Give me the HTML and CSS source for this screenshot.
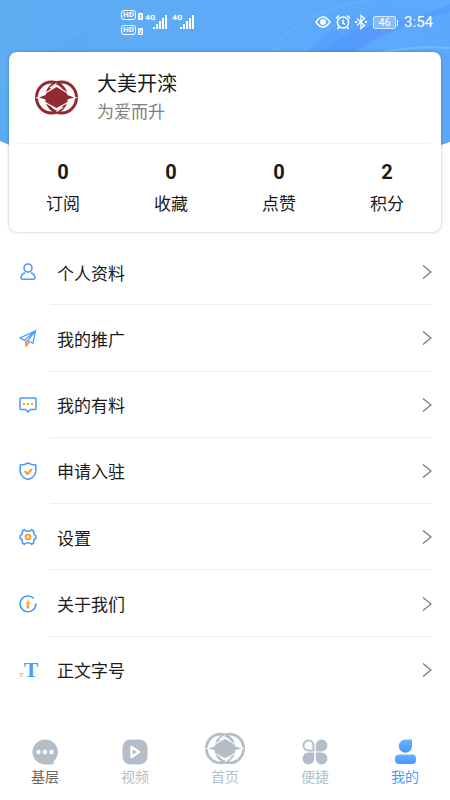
FILE: index.html
```html
<!DOCTYPE html>
<html lang="zh-CN">
<head>
    <meta charset="UTF-8">
    <meta name="viewport" content="width=device-width, initial-scale=1.0">
    <title>我的</title>
    <link rel="stylesheet" href="styles.css">
</head>
<body>
    <!-- Shared symbols -->
    <svg class="defs" width="0" height="0" aria-hidden="true">
        <symbol id="logo" viewBox="0 0 43 35">
            <g fill="none" stroke="currentColor" stroke-width="3">
                <ellipse cx="16.500" cy="17.500" rx="15" ry="15.500"/>
                <ellipse cx="26.500" cy="17.500" rx="15" ry="15.500"/>
            </g>
            <path d="M21.500 3.500L15 8M21.500 31.500L28 27" fill="none" stroke="#fff" stroke-width="1.200"/>
            <path d="M4 17.500L10.500 15L11.500 13L21.500 7L31.500 13L32.500 15L39 17.500L32.500 19.500V22L21.500 28L10.500 22V19.500Z" fill="currentColor" stroke="#fff" stroke-width="2.400" paint-order="stroke"/>
        </symbol>
        <symbol id="arrow" viewBox="0 0 10 16">
            <path d="M1 1.500 L9 8 L1 14.500" fill="none" stroke="#777" stroke-width="1.200"/>
        </symbol>
        <symbol id="signal" viewBox="0 0 15 14">
            <path d="M0 12h2v2h-2zM3 9h2v5h-2zM6 6h2v8h-2zM9 3h2v11h-2zM12 0h2v14h-2z" fill="#fff"/>
        </symbol>
    </svg>

    <header class="header">
        <svg class="header-bg" viewBox="0 0 450 146" preserveAspectRatio="none" aria-hidden="true">
            <defs>
                <linearGradient id="sky" x1="0" x2="1">
                    <stop offset="0" stop-color="#5eadf2"/>
                    <stop offset="1" stop-color="#5ca8ff"/>
                </linearGradient>
                <linearGradient id="wave" x1="1" y1="0" x2="0" y2="1">
                    <stop offset="0" stop-color="#63aeff"/>
                    <stop offset="1" stop-color="#4a92fb"/>
                </linearGradient>
            </defs>
            <path d="M0 0H450V142L438 146H12L0 141Z" fill="url(#sky)"/>
            <path d="M0 95Q40 50 90 30L60 146H12L0 141Z" fill="#4f9ff0" opacity=".2"/>
            <path d="M300 60Q340 12 398 0H450V12Q390 20 350 55Z" fill="url(#wave)" opacity=".5"/>
            <path d="M322 53Q352 24 390 24Q425 16 450 4V12Q400 24 354 53Z" fill="#4b8cf8" opacity=".35"/>
            <path d="M345 53Q375 30 425 16" fill="none" stroke="#7d8cf0" stroke-width="2" opacity=".35"/>
            <path d="M270 53Q300 10 370 0" fill="none" stroke="#84bcfb" stroke-width="2" opacity=".25"/>
            <path d="M380 53Q415 45 450 48" fill="none" stroke="#8bc3ff" stroke-width="2" opacity=".6"/>
        </svg>

        <div class="status-bar">
            <div class="status-left">
                <div class="hd-list">
                    <span class="hd"><b>HD</b><i>1</i></span>
                    <span class="hd"><b>HD</b><i>2</i></span>
                </div>
                <span class="net">4G</span>
                <svg width="15" height="14"><use href="#signal"/></svg>
                <span class="net">4G</span>
                <svg width="15" height="14"><use href="#signal"/></svg>
            </div>
            <div class="status-right">
                <svg width="16" height="14" viewBox="0 0 16 14" fill="none" stroke="#fff" stroke-width="1.500">
                    <path d="M1 7Q8 -3 15 7Q8 17 1 7Z"/>
                    <circle cx="8" cy="7" r="3" fill="#fff" stroke="none"/>
                </svg>
                <svg width="16" height="16" viewBox="0 0 16 16" fill="none" stroke="#fff" stroke-width="1.500">
                    <circle cx="8" cy="8.500" r="5.600"/>
                    <path d="M8 5.500V9L10 10.500M1 4.500L4 1.500M15 4.500L12 1.500M4 13L2.500 15M12 13L13.500 15"/>
                </svg>
                <svg width="12" height="16" viewBox="0 0 12 16" fill="none" stroke="#fff" stroke-width="1.300">
                    <path d="M2 4.500L9.500 11.500L6 14.500V1.500L9.500 4.500L2 11.500"/>
                    <path d="M0 8H2M10 8H12" stroke-width="2"/>
                </svg>
                <span class="battery">46</span>
                <span class="clock">3:54</span>
            </div>
        </div>

        <section class="card">
            <div class="profile">
                <svg class="avatar" width="43" height="35"><use href="#logo"/></svg>
                <div>
                    <h1 class="name">大美开滦</h1>
                    <p class="motto">为爱而升</p>
                </div>
            </div>
            <div class="stats">
                <a href="#" class="stat"><strong>0</strong><span>订阅</span></a>
                <a href="#" class="stat"><strong>0</strong><span>收藏</span></a>
                <a href="#" class="stat"><strong>0</strong><span>点赞</span></a>
                <a href="#" class="stat"><strong>2</strong><span>积分</span></a>
            </div>
        </section>
    </header>

    <main class="menu">
        <a href="#" class="menu-item">
            <svg class="menu-icon" viewBox="0 0 18 18">
                <circle cx="9" cy="5" r="4"/>
                <path d="M6 9.800Q2 11.500 2 15Q2 16.300 3.500 16.300H14.500Q16 16.300 16 15Q16 11.500 12 9.800"/>
            </svg>
            <span class="menu-text">个人资料</span>
            <svg class="arrow" width="10" height="16"><use href="#arrow"/></svg>
        </a>
        <a href="#" class="menu-item">
            <svg class="menu-icon" viewBox="0 0 18 18">
                <path class="orange" d="M7 11.500V16.500L9.800 13.500"/>
                <path d="M16.500 1.800L1 9L5.500 11.200L16.500 1.800L14 14.200L8.500 12L16.500 1.800" stroke-width="1.300"/>
            </svg>
            <span class="menu-text">我的推广</span>
            <svg class="arrow" width="10" height="16"><use href="#arrow"/></svg>
        </a>
        <a href="#" class="menu-item">
            <svg class="menu-icon" viewBox="0 0 18 18">
                <path d="M2 2H16Q17 2 17 3V12.500Q17 13.500 16 13.500H11.500L9 15.800L6.500 13.500H2Q1 13.500 1 12.500V3Q1 2 2 2Z"/>
                <path class="orange" d="M4 8H6M8 8H10M12 8H14"/>
            </svg>
            <span class="menu-text">我的有料</span>
            <svg class="arrow" width="10" height="16"><use href="#arrow"/></svg>
        </a>
        <a href="#" class="menu-item">
            <svg class="menu-icon" viewBox="0 0 18 18">
                <path d="M9 0.800Q12 2.800 16.800 3V9.500Q16.500 15 9 17.500Q1.500 15 1.200 9.500V3Q6 2.800 9 0.800Z"/>
                <path class="orange" d="M5.500 9L8.500 12L13 7"/>
            </svg>
            <span class="menu-text">申请入驻</span>
            <svg class="arrow" width="10" height="16"><use href="#arrow"/></svg>
        </a>
        <a href="#" class="menu-item">
            <svg class="menu-icon" viewBox="0 0 18 18">
                <path d="M5.200 1.700Q6.500 3.300 9 3.300Q11.500 3.300 12.800 1.700L14.600 3Q14 6.500 16.800 7.800V10.200Q14 11.500 14.600 15L12.800 16.300Q11.500 14.700 9 14.700Q6.500 14.700 5.200 16.300L3.400 15Q4 11.500 1.200 10.200V7.800Q4 6.500 3.400 3Z"/>
                <circle class="orange" cx="9" cy="9" r="2.400"/>
            </svg>
            <span class="menu-text">设置</span>
            <svg class="arrow" width="10" height="16"><use href="#arrow"/></svg>
        </a>
        <a href="#" class="menu-item">
            <svg class="menu-icon" viewBox="0 0 18 18">
                <path d="M14.800 3.500A7.900 7.900 0 1 0 16.900 8.500"/>
                <path class="orange" d="M7.300 7.800H9.500L8.500 12.500H10.500M9.500 4.500V5.800"/>
            </svg>
            <span class="menu-text">关于我们</span>
            <svg class="arrow" width="10" height="16"><use href="#arrow"/></svg>
        </a>
        <a href="#" class="menu-item">
            <span class="font-icon" aria-hidden="true"><small>T</small>T</span>
            <span class="menu-text">正文字号</span>
            <svg class="arrow" width="10" height="16"><use href="#arrow"/></svg>
        </a>
    </main>

    <nav class="tabs">
        <a href="#" class="tab dark">
            <svg width="26" height="26" viewBox="0 0 26 26">
                <path d="M13 0.500A12.500 12.500 0 1 0 13 25.500H21.500V22.500A12.500 12.500 0 0 0 13 0.500Z" fill="#b3bec8"/>
                <g fill="#fff"><circle cx="6.500" cy="13" r="2.200"/><circle cx="13" cy="13" r="2.200"/><circle cx="19.500" cy="13" r="2.200"/></g>
            </svg>
            <span>基层</span>
        </a>
        <a href="#" class="tab">
            <svg width="26" height="26" viewBox="0 0 26 26">
                <rect x="0.500" y="0.500" width="25" height="25" rx="8" fill="#b3bec8"/>
                <path d="M9.500 8V18L17 13Z" fill="none" stroke="#fff" stroke-width="2.400" stroke-linejoin="round"/>
            </svg>
            <span>视频</span>
        </a>
        <a href="#" class="tab">
            <svg width="40" height="33"><use href="#logo"/></svg>
            <span>首页</span>
        </a>
        <a href="#" class="tab">
            <svg width="26" height="26" viewBox="0 0 26 26" fill="#b3bec8">
                <path d="M6.500 1.500A5 5 0 0 0 6.500 11.500H11.500V6.500A5 5 0 0 0 6.500 1.500Z" fill="none" stroke="#b3bec8" stroke-width="2"/>
                <path d="M19.500 0.500A6 6 0 0 1 19.500 12.500H13.800V6.500A6 6 0 0 1 19.500 0.500Z"/>
                <path d="M6.500 25.500A6 6 0 0 1 6.500 13.500H12.300V19.500A6 6 0 0 1 6.500 25.500Z"/>
                <path d="M19.500 25.500A6 6 0 0 0 19.500 13.500H13.800V19.500A6 6 0 0 0 19.500 25.500Z"/>
            </svg>
            <span>便捷</span>
        </a>
        <a href="#" class="tab active">
            <svg width="26" height="26" viewBox="0 0 26 26">
                <defs>
                    <linearGradient id="me" x2="0" y2="1">
                        <stop offset="0" stop-color="#6bb4ff"/>
                        <stop offset="1" stop-color="#4594ff"/>
                    </linearGradient>
                </defs>
                <path d="M13.500 0.500H20V7A6.600 6.600 0 1 1 13.500 0.500Z" fill="url(#me)"/>
                <rect x="3" y="15.500" width="21" height="9.500" rx="4" fill="url(#me)"/>
            </svg>
            <span>我的</span>
        </a>
    </nav>
</body>
</html>
```
FILE: styles.css
```css
* {
    box-sizing: border-box;
    margin: 0;
    padding: 0;
}
body {
    display: flex;
    flex-direction: column;
    min-height: 100vh;
    background-color: #fff;
    color: #1a1a1a;
    font-family: Roboto, "Noto Sans CJK SC", sans-serif;
    font-size: 17px;
}
a {
    color: inherit;
    text-decoration: none;
}
svg {
    flex: none;
    display: block;
}
.defs {
    position: absolute;
}

/* Header */
.header {
    position: relative;
    padding: 0 9px;
}
.header-bg {
    position: absolute;
    top: 0;
    left: 0;
    width: 100%;
    height: 146px;
}
.status-bar {
    position: relative;
    display: flex;
    justify-content: space-between;
    height: 52px;
    padding: 8px 8px 0 112px;
    color: #fff;
}
.status-left {
    display: flex;
    align-items: flex-start;
    padding-top: 2px;
}
.status-left svg {
    margin: 5px 4px 0 0;
}
.hd-list {
    display: flex;
    flex-direction: column;
    gap: 5px;
    margin-right: 2px;
}
.hd {
    display: flex;
    align-items: flex-end;
    gap: 2px;
    font-size: 8px;
    line-height: 8px;
}
.hd b {
    padding: 0 1px;
    border: 1px solid #fff;
    border-radius: 3px;
}
.hd i {
    padding: 0 1px;
    border-radius: 1px;
    background-color: #fff;
    color: #5ba9f5;
    font-size: 6px;
    font-style: normal;
    font-weight: bold;
    line-height: 7px;
}
.net {
    margin: 3px -2px 0 0;
    font-size: 8px;
    font-weight: bold;
    line-height: 10px;
}
.status-right {
    display: flex;
    align-items: center;
    gap: 4px;
    height: 28px;
}
.battery {
    position: relative;
    width: 23px;
    height: 13px;
    margin: 0 4px 0 2px;
    border: 1px solid #d5e9ff;
    border-radius: 2px;
    background-color: #85bdfb;
    font-size: 11px;
    line-height: 11px;
    text-align: center;
}
.battery::after {
    content: "";
    position: absolute;
    top: 3px;
    right: -3px;
    width: 1px;
    height: 6px;
    background-color: #fff;
}
.clock {
    font-size: 15px;
}

/* Profile card */
.card {
    position: relative;
    height: 180px;
    border-radius: 8px;
    background-color: #fff;
    box-shadow: 0 0 3px rgba(0, 0, 0, 0.3);
}
.profile {
    display: flex;
    align-items: center;
    gap: 19px;
    height: 92px;
    margin: 0 10px;
    padding-left: 16px;
    border-bottom: 1px solid #f3f3f3;
}
.avatar {
    color: #922a31;
}
.name {
    font-size: 20px;
    font-weight: normal;
    line-height: 28px;
}
.motto {
    color: #808080;
    line-height: 28px;
}
.stats {
    display: grid;
    grid-template-columns: repeat(4, 1fr);
    padding-top: 12px;
}
.stat {
    display: flex;
    flex-direction: column;
    align-items: center;
    line-height: 32px;
}
.stat strong {
    font-size: 20px;
}

/* Menu */
.menu {
    flex: 1;
    display: grid;
    grid-auto-rows: 1fr;
    padding: 7px 18px 0;
}
.menu-item {
    position: relative;
    display: flex;
    align-items: center;
    min-height: 60px;
}
.menu-item:not(:last-child)::after {
    content: "";
    position: absolute;
    left: 32px;
    right: 0;
    bottom: 0;
    height: 1px;
    background-color: #eee;
}
.menu-icon {
    width: 18px;
    height: 18px;
    margin-right: 20px;
    margin-left: 1px;
    fill: none;
    stroke: #4a9bff;
    stroke-width: 1.6;
}
.menu-icon .orange {
    stroke: #ff9a2e;
    stroke-width: 2;
}
.font-icon {
    display: flex;
    align-items: baseline;
    width: 39px;
    padding-left: 1px;
    color: #4a9bff;
    font-family: "Liberation Serif", serif;
    font-size: 22px;
    font-weight: bold;
}
.font-icon small {
    color: #ffa64d;
    font-size: 7px;
}
.menu-text {
    flex: 1;
}

/* Bottom tabs */
.tabs {
    display: grid;
    grid-template-columns: repeat(5, 1fr);
    height: 97px;
    padding-bottom: 13px;
}
.tab {
    display: flex;
    flex-direction: column;
    align-items: center;
    justify-content: flex-end;
    gap: 2px;
    color: #b3bec8;
    font-size: 14px;
    line-height: 20px;
}
.tab.dark {
    color: #666;
}
.tab.active {
    color: #4a9bff;
}
```
